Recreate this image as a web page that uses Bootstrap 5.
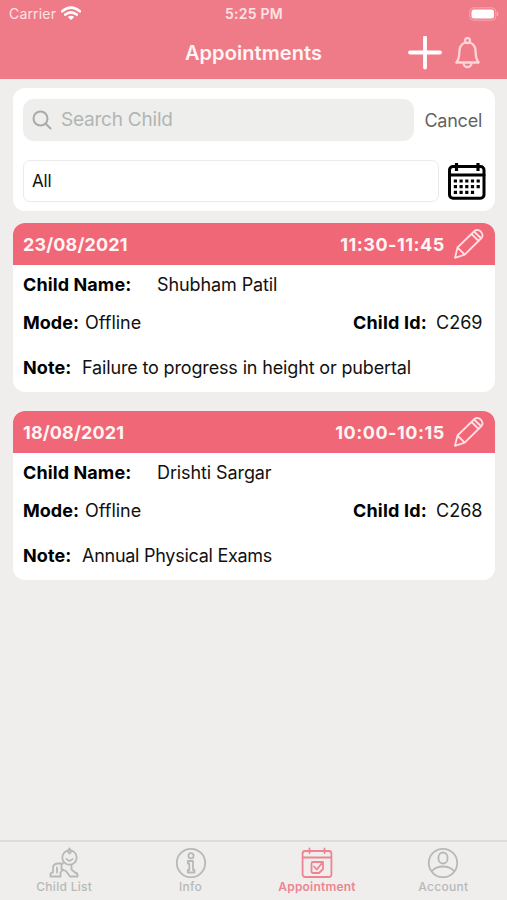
<!DOCTYPE html>
<html lang="en">
<head>
<meta charset="utf-8">
<meta name="viewport" content="width=device-width, initial-scale=1">
<title>Appointments</title>
<link href="https://cdn.jsdelivr.net/npm/bootstrap@5.3.0/dist/css/bootstrap.min.css" rel="stylesheet">
<style>
body{font-family:Inter,"Liberation Sans",sans-serif;background:#efeeec;color:#111;height:900px;overflow:hidden;line-height:1.2}
svg{display:block;flex:none;fill:none;stroke-linecap:round;stroke-linejoin:round}
.top-bar{background:#f07b88;height:79px;color:#fff}
.status{height:28px;font-size:14px;color:#fde3e4;padding:0 8px 0 9px}
.carrier{letter-spacing:.17px;margin-right:5px}
.status-time{font-weight:600;letter-spacing:.25px}
.title-row{height:49px;padding:0 26px 0 26px}
.page-title{font-size:20px;font-weight:600;color:#fff5f4;margin:0;letter-spacing:.08px}
.side{width:73px}
.main-area{padding:9px 12px 0 13px}
.panel,.visit{background:#fff;border-radius:12px}
.panel{height:123px;padding:10.500px 9px 0 10px;margin-bottom:12px}
.search-box{width:391px;height:42px;background:#eeeeec;border-radius:11px;color:#b2b5b4;font-size:19px;padding-left:9px;gap:9px}
.t-search{letter-spacing:-.22px;padding-top:2px}
.cancel{font-size:18px;color:#636363;padding:2px 4px 0 0;letter-spacing:-.25px}
.choice{width:416px;height:42px;border:1px solid #ebebeb;border-radius:7px;font-size:17px;letter-spacing:-.2px;padding:2px 0 0 8px}
.choice-row{margin-top:19px}
.visit{height:169px;margin-bottom:19px;overflow:hidden;font-size:18px}
.visit-head{background:#f06777;height:42px;color:#fff5f4;font-weight:700;padding:0 11px 0 10px}
.date{letter-spacing:.12px;padding-top:1px}
.hours{margin-right:9.200px;letter-spacing:.52px;padding-top:1px}
.visit-row{height:38px;padding:2px 12.500px 0 10px}
.note-row{height:52px}
.visit b{font-weight:700;color:#000}
.k-name{width:134px;letter-spacing:.1px}
.k-mode{width:62px}
.k-id{margin-right:9px;letter-spacing:.2px}
.k-note{width:59px;letter-spacing:.1px}
.v-name{letter-spacing:-.1px}
.v-note{letter-spacing:-.15px}
.v-note-short{letter-spacing:-.27px}
.tabs{height:60px;border-top:2px solid #dcdcdb;background:#efeeec;color:#b7b9b8;font-size:12px;font-weight:500;padding-left:1px}
.tabs a{color:inherit;text-decoration:none;width:126.4px;padding-top:5px;letter-spacing:.28px}
.tabs a.on{color:#ee8491;font-weight:600;letter-spacing:.2px}
.tabs svg{stroke:currentColor;stroke-width:1.8}
.tabs span{padding-top:.6px}
</style>
</head>
<body class="d-flex flex-column">
<header class="top-bar">
  <div class="status d-flex align-items-center justify-content-between">
    <div class="side d-flex align-items-center text-nowrap"><span class="carrier">Carrier</span>
      <svg width="20" height="15" viewBox="0 0 20 15" stroke="#fff" stroke-width="2.600" stroke-linecap="butt"><path d="M1.200 5.300Q10-2.200 18.800 5.300M4.300 8.600Q10 4.100 15.700 8.600"/><path d="M6.800 10.900Q10 8.400 13.200 10.900L10 14Z" fill="#fff" stroke="none"/></svg>
    </div>
    <span class="status-time">5:25 PM</span>
    <div class="side d-flex justify-content-end"><svg width="30" height="15" viewBox="0 0 30 15"><rect x=".8" y=".8" width="26" height="12.400" rx="4" stroke="#f7a9b0"/><rect x="2.500" y="2.500" width="22.500" height="9" rx="2.500" fill="#fff"/><path d="M28.500 5.500v3" stroke="#f7a9b0" stroke-width="1.500"/></svg></div>
  </div>
  <div class="title-row d-flex align-items-center justify-content-between">
    <div class="side"></div>
    <h1 class="page-title">Appointments</h1>
    <div class="side d-flex align-items-center justify-content-between">
      <svg width="34" height="34" viewBox="0 0 34 34" stroke="#fff" stroke-width="3.800"><path d="M17 1.500v30M2 16.500h30"/></svg>
      <svg width="26" height="32" viewBox="0 0 26 32" stroke="#fdd5d7" stroke-width="2.300"><circle cx="12.500" cy="3.500" r="2.500"/><path d="M10 5.500C5 7.500 4.300 11 4.300 15.500C4.300 20.500 3.800 22.500 1.300 25.500H23.700C21.200 22.500 20.700 20.500 20.700 15.500C20.700 11 20 7.500 15 5.500M8.500 26A4 4 0 0 0 16.500 26"/></svg>
    </div>
  </div>
</header>
<main class="main-area flex-grow-1">
  <section class="panel">
    <div class="d-flex align-items-center justify-content-between">
      <div class="search-box d-flex align-items-center"><svg width="20" height="20" viewBox="0 0 20 20" stroke="#a9abaa" stroke-width="2"><circle cx="8.500" cy="8.500" r="7"/><path d="M13.700 13.700L18.500 18.500"/></svg><span class="t-search">Search Child</span></div>
      <span class="cancel">Cancel</span>
    </div>
    <div class="choice-row d-flex align-items-center justify-content-between">
      <div class="choice d-flex align-items-center">All</div>
      <svg width="38" height="38" viewBox="0 0 38 38" stroke="#000" stroke-width="3"><rect x="1.500" y="4.500" width="34.500" height="31.700" rx="3.500"/><path d="M2 13h34"/><path d="M8.500 1v8M30 1v8" stroke-width="3.200" stroke-linecap="butt"/><path d="M5.800 19h27M5.800 24.700h27M5.800 30.400h21" stroke-width="3.200" stroke-linecap="butt" stroke-dasharray="3.200 2.500"/></svg>
    </div>
  </section>
  <article class="visit">
    <div class="visit-head d-flex align-items-center"><span class="date">23/08/2021</span><span class="hours ms-auto">11:30-11:45</span>
      <svg width="30" height="30" viewBox="0 0 30 30" stroke="#ffe1e3" stroke-width="1.800"><path d="M1 28.800L3.500 18.500L20.500 2Q23.500-.3 26.700 2.500Q30 6 27.500 9L10.700 25.700ZM3.500 18.500L10.700 25.700M17.500 5L24.700 12M20 2.500L27.300 9.500"/></svg></div>
    <div class="visit-row d-flex align-items-center"><b class="k-name">Child Name:</b><span class="v-name">Shubham Patil</span></div>
    <div class="visit-row d-flex align-items-center"><b class="k-mode">Mode:</b><span>Offline</span><b class="k-id ms-auto">Child Id:</b><span>C269</span></div>
    <div class="visit-row note-row d-flex align-items-center"><b class="k-note">Note:</b><span class="v-note">Failure to progress in height or pubertal</span></div>
  </article>
  <article class="visit">
    <div class="visit-head d-flex align-items-center"><span class="date">18/08/2021</span><span class="hours ms-auto">10:00-10:15</span>
      <svg width="30" height="30" viewBox="0 0 30 30" stroke="#ffe1e3" stroke-width="1.800"><path d="M1 28.800L3.500 18.500L20.500 2Q23.500-.3 26.700 2.500Q30 6 27.500 9L10.700 25.700ZM3.500 18.500L10.700 25.700M17.500 5L24.700 12M20 2.500L27.300 9.500"/></svg></div>
    <div class="visit-row d-flex align-items-center"><b class="k-name">Child Name:</b><span class="v-name">Drishti Sargar</span></div>
    <div class="visit-row d-flex align-items-center"><b class="k-mode">Mode:</b><span>Offline</span><b class="k-id ms-auto">Child Id:</b><span>C268</span></div>
    <div class="visit-row note-row d-flex align-items-center"><b class="k-note">Note:</b><span class="v-note-short">Annual Physical Exams</span></div>
  </article>
</main>
<nav class="tabs d-flex">
  <a href="#" class="d-flex flex-column align-items-center"><svg width="32" height="32" viewBox="0 0 32 32"><circle cx="21.500" cy="10.500" r="7.200"/><path d="M21.500 1.500Q18.500 5 21.500 6.500Q24.500 5 21.500 1.500M18.500 12Q21.500 15.500 24.500 12M15 16.500H9.500Q5 17 5 21V25.500H4Q2 26 2.500 29.500H12.500V25.500L15 22.500M13.500 17.500V22.500L18 24L22 29.500H29.500Q30 26 27 25.500L23.500 22.500V18M9 20.500V25.500"/></svg><span>Child List</span></a>
  <a href="#" class="d-flex flex-column align-items-center"><svg width="32" height="32" viewBox="0 0 32 32"><circle cx="16" cy="16" r="14.200"/><circle cx="16" cy="8.800" r="2.600"/><path d="M12.800 14H18V23H19.500V25.500H12.800V23H14.300V16.500H12.800Z"/></svg><span>Info</span></a>
  <a href="#" class="on d-flex flex-column align-items-center"><svg width="32" height="32" viewBox="0 0 32 32"><rect x="1.600" y="4" width="28.800" height="26" rx="2.500"/><path d="M2 10.500H30M8.500 1.500V6M23.500 1.500V6M20 15H12Q10.500 15 10.500 16.500V24.500Q10.500 26 12 26H18L22 22V15H12M13 19.500L15.800 22.500L21 16"/></svg><span>Appointment</span></a>
  <a href="#" class="d-flex flex-column align-items-center"><svg width="32" height="32" viewBox="0 0 32 32"><circle cx="16" cy="16" r="14.200"/><rect x="11.500" y="5.500" width="9" height="11" rx="4.500"/><path d="M5 24Q9 19.500 16 19.500T27 24"/></svg><span>Account</span></a>
</nav>
<script src="https://cdn.jsdelivr.net/npm/bootstrap@5.3.0/dist/js/bootstrap.bundle.min.js"></script>
</body>
</html>
